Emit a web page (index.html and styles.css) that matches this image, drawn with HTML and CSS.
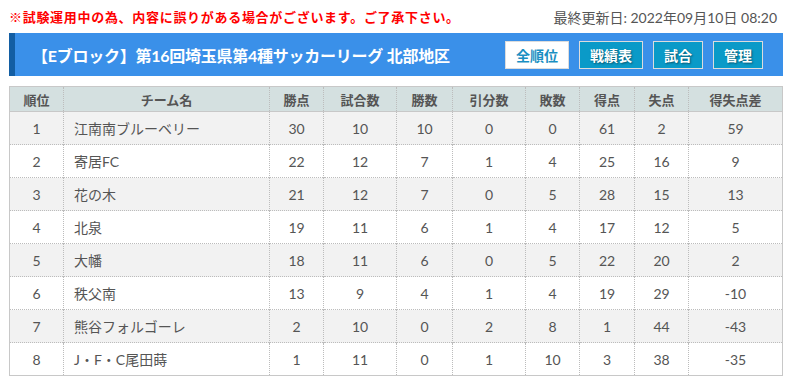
FILE: index.html
```html
<!DOCTYPE html>
<html lang="ja">
<head>
<meta charset="utf-8">
<link rel="stylesheet" href="styles.css">
</head>
<body>
<div class="page">
  <div class="topline">
    <p class="notice">※試験運用中の為、内容に誤りがある場合がございます。ご了承下さい。</p>
    <p class="updated">最終更新日: 2022年09月10日 08:20</p>
  </div>
  <div class="titlebar">
    <h1 class="title">【Eブロック】第16回埼玉県第4種サッカーリーグ 北部地区</h1>
    <nav class="btns">
      <a class="btn btn-active w64">全順位</a>
      <a class="btn w64">戦績表</a>
      <a class="btn w50">試合</a>
      <a class="btn w50">管理</a>
    </nav>
  </div>
  <table class="standings">
    <colgroup>
      <col class="c1"><col class="c2"><col class="c3"><col class="c4"><col class="c5"><col class="c6"><col class="c7"><col class="c8"><col class="c9"><col class="c10">
    </colgroup>
    <thead>
      <tr><th>順位</th><th>チーム名</th><th>勝点</th><th>試合数</th><th>勝数</th><th>引分数</th><th>敗数</th><th>得点</th><th>失点</th><th>得失点差</th></tr>
    </thead>
    <tbody>
      <tr><td>1</td><td class="team">江南南ブルーベリー</td><td>30</td><td>10</td><td>10</td><td>0</td><td>0</td><td>61</td><td>2</td><td>59</td></tr>
      <tr><td>2</td><td class="team">寄居FC</td><td>22</td><td>12</td><td>7</td><td>1</td><td>4</td><td>25</td><td>16</td><td>9</td></tr>
      <tr><td>3</td><td class="team">花の木</td><td>21</td><td>12</td><td>7</td><td>0</td><td>5</td><td>28</td><td>15</td><td>13</td></tr>
      <tr><td>4</td><td class="team">北泉</td><td>19</td><td>11</td><td>6</td><td>1</td><td>4</td><td>17</td><td>12</td><td>5</td></tr>
      <tr><td>5</td><td class="team">大幡</td><td>18</td><td>11</td><td>6</td><td>0</td><td>5</td><td>22</td><td>20</td><td>2</td></tr>
      <tr><td>6</td><td class="team">秩父南</td><td>13</td><td>9</td><td>4</td><td>1</td><td>4</td><td>19</td><td>29</td><td>-10</td></tr>
      <tr><td>7</td><td class="team">熊谷フォルゴーレ</td><td>2</td><td>10</td><td>0</td><td>2</td><td>8</td><td>1</td><td>44</td><td>-43</td></tr>
      <tr><td>8</td><td class="team">J・F・C尾田蒔</td><td>1</td><td>11</td><td>0</td><td>1</td><td>10</td><td>3</td><td>38</td><td>-35</td></tr>
    </tbody>
  </table>
</div>
</body>
</html>
```

FILE: styles.css
```css
* { box-sizing: border-box; }
html, body { margin: 0; padding: 0; background: #fff; }
body {
  font-family: Lato, "Noto Sans CJK JP", sans-serif;
  color: #555;
}
.page {
  width: 774px;
  margin-left: 9px;
}
.topline {
  display: flex;
  justify-content: space-between;
  align-items: center;
  height: 33px;
  padding-right: 6px;
}
.notice {
  margin: 0;
  color: #ff0000;
  font-size: 13px;
  font-weight: bold;
  letter-spacing: 0.7px;
}
.updated {
  margin: 0;
  font-size: 14px;
  color: #555;
}
.titlebar {
  display: flex;
  align-items: center;
  justify-content: space-between;
  height: 43px;
  background: #3a90e9;
  border-left: 6px solid #135ea3;
  padding: 0 20px 0 17px;
}
.title {
  margin: 0;
  color: #fff;
  font-size: 16px;
  font-weight: bold;
  letter-spacing: -0.25px;
}
.btns {
  display: flex;
  gap: 10px;
}
.btn {
  display: flex;
  align-items: center;
  justify-content: center;
  height: 28px;
  border: 1px solid #dcdcdc;
  background: #0a9ac8;
  color: #fff;
  font-size: 14px;
  font-weight: bold;
  text-shadow: 1px 1px 2px rgba(0,0,0,0.45);
}
.btn-active {
  background: #fff;
  color: #1a8fc2;
  text-shadow: none;
}
.w64 { width: 64px; }
.w50 { width: 50px; }
.standings {
  margin-top: 10px;
  width: 773px;
  border-collapse: collapse;
  table-layout: fixed;
  border: 1px solid #c8c8c8;
  font-size: 14px;
}
.c1 { width: 54px; }
.c2 { width: 206px; }
.c3 { width: 54px; }
.c4 { width: 73px; }
.c5 { width: 56px; }
.c6 { width: 73px; }
.c7 { width: 54px; }
.c8 { width: 55px; }
.c9 { width: 54px; }
.c10 { width: 94px; }
.standings th {
  background: #d4e0e0;
  height: 25px;
  font-size: 13px;
  font-weight: bold;
  color: #555;
  text-align: center;
  border-left: 1px dotted #bcbcbc;
  border-bottom: 1px solid #c8c8c8;
  padding: 0;
}
.standings td {
  height: 33px;
  text-align: center;
  border-left: 1px dotted #bcbcbc;
  border-top: 1px dotted #bcbcbc;
  padding: 0;
  color: #555;
}
.standings tbody tr:nth-child(odd) td { background: #f2f2f2; }
.standings td.team {
  text-align: left;
  padding-left: 10px;
}
```
